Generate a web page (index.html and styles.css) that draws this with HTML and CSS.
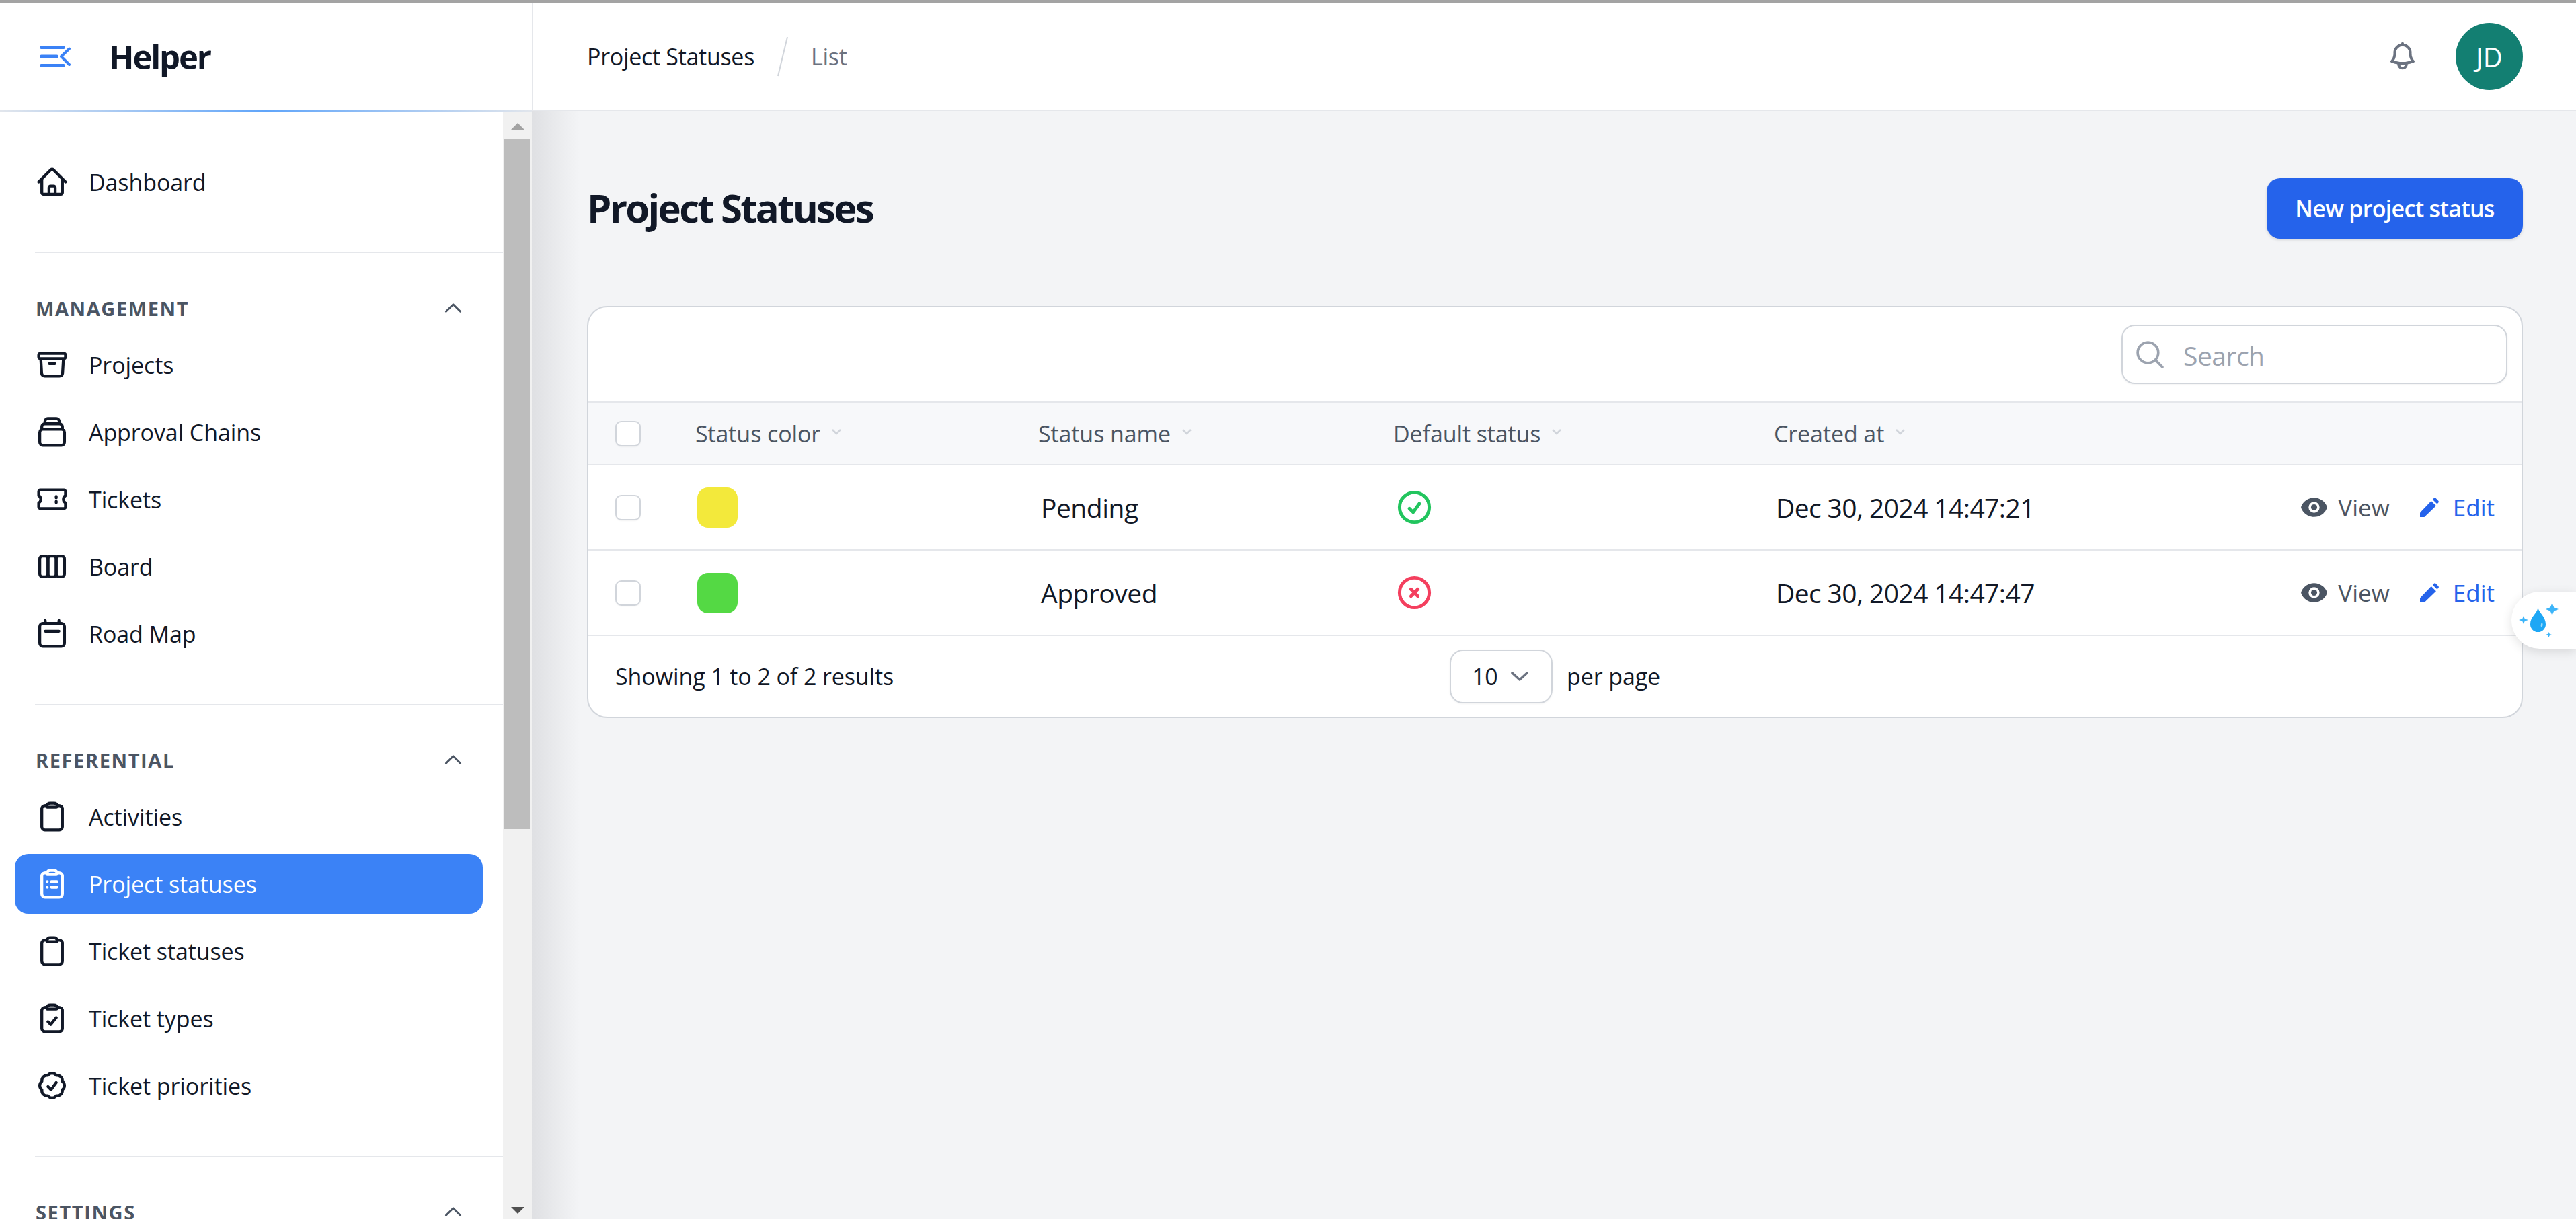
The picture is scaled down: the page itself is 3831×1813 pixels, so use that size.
FILE: index.html
```html
<!DOCTYPE html>
<html lang="en">
<head>
  <meta charset="UTF-8">
  <title>Project Statuses - Helper</title>
  <link rel="stylesheet" href="styles.css">
</head>
<body>
  <div class="app">
    <!-- Sidebar -->
    <aside class="sidebar">
      <div class="brand">
        <svg class="brand-toggle" viewBox="0 0 46 32" fill="none" stroke="#3b82f6" stroke-width="5" stroke-linecap="round" stroke-linejoin="round">
          <path d="M2.5 2.500h33M2.500 16h23M2.500 29.500h33"/>
          <path stroke-width="4" d="M44 4.500 32 16l12 12"/>
        </svg>
        <span class="brand-name">Helper</span>
      </div>
      <div class="sidebar-body">
        <nav class="nav">
          <div class="nav-group">
            <a class="nav-item">
              <svg class="nav-icon" viewBox="0 0 24 24"><path d="m2.25 12 8.954-8.955c.44-.439 1.152-.439 1.591 0L21.75 12M4.5 9.75v10.125c0 .621.504 1.125 1.125 1.125H9.75v-4.875c0-.621.504-1.125 1.125-1.125h2.25c.621 0 1.125.504 1.125 1.125V21h4.125c.621 0 1.125-.504 1.125-1.125V9.75M8.25 21h8.25"/></svg>
              Dashboard
            </a>
          </div>
          <hr class="nav-rule">
          <div class="nav-label">
            <span>Management</span>
            <svg class="nav-chevron" viewBox="0 0 24 24"><path d="m4.5 15.75 7.5-7.5 7.5 7.5"/></svg>
          </div>
          <div class="nav-group">
            <a class="nav-item">
              <svg class="nav-icon" viewBox="0 0 24 24"><path d="m20.25 7.5-.625 10.632a2.25 2.25 0 0 1-2.247 2.118H6.622a2.25 2.25 0 0 1-2.247-2.118L3.75 7.5M10 11.25h4M3.375 7.5h17.25c.621 0 1.125-.504 1.125-1.125v-1.5c0-.621-.504-1.125-1.125-1.125H3.375c-.621 0-1.125.504-1.125 1.125v1.5c0 .621.504 1.125 1.125 1.125Z"/></svg>
              Projects
            </a>
            <a class="nav-item">
              <svg class="nav-icon" viewBox="0 0 24 24"><path d="M4.5 10V8.200A2.200 2.200 0 0 1 6.700 6h10.600a2.200 2.200 0 0 1 2.200 2.200V10M6.800 6V4.200A2 2 0 0 1 8.800 2.200h6.400a2 2 0 0 1 2 2V6M5.250 10h13.500A2.250 2.250 0 0 1 21 12.250v7.200a2.250 2.250 0 0 1-2.250 2.250H5.250A2.250 2.250 0 0 1 3 19.450v-7.200A2.250 2.250 0 0 1 5.250 10Z"/></svg>
              Approval Chains
            </a>
            <a class="nav-item">
              <svg class="nav-icon" viewBox="0 0 24 24"><path d="M15 10v1m0 2.500v1M3.375 5.250c-.621 0-1.125.504-1.125 1.125v3.026a2.999 2.999 0 0 1 0 5.198v3.026c0 .621.504 1.125 1.125 1.125h17.250c.621 0 1.125-.504 1.125-1.125v-3.026a2.999 2.999 0 0 1 0-5.198V6.375c0-.621-.504-1.125-1.125-1.125H3.375Z"/></svg>
              Tickets
            </a>
            <a class="nav-item">
              <svg class="nav-icon" viewBox="0 0 24 24"><rect x="3" y="4.500" width="6" height="15" rx="2"/><rect x="9" y="4.500" width="6" height="15" rx="2"/><rect x="15" y="4.500" width="6" height="15" rx="2"/></svg>
              Board
            </a>
            <a class="nav-item">
              <svg class="nav-icon" viewBox="0 0 24 24"><path d="M7 2.400v2.100M17 2.400v2.100M7 10.200h10M5.250 4.500h13.500A2.250 2.250 0 0 1 21 6.750v12.200a2.250 2.250 0 0 1-2.250 2.250H5.250A2.250 2.250 0 0 1 3 18.950V6.750A2.250 2.250 0 0 1 5.250 4.500Z"/></svg>
              Road Map
            </a>
          </div>
          <hr class="nav-rule">
          <div class="nav-label">
            <span>Referential</span>
            <svg class="nav-chevron" viewBox="0 0 24 24"><path d="m4.5 15.75 7.5-7.5 7.5 7.5"/></svg>
          </div>
          <div class="nav-group">
            <a class="nav-item">
              <svg class="nav-icon" viewBox="0 0 24 24"><path d="M15.666 3.888A2.25 2.25 0 0 0 13.5 2.25h-3c-1.03 0-1.9.693-2.166 1.638m7.332 0c.055.194.084.4.084.612v0a.75.75 0 0 1-.75.75H9a.75.75 0 0 1-.75-.75v0c0-.212.03-.418.084-.612m7.332 0c.646.049 1.288.11 1.927.184 1.1.128 1.907 1.077 1.907 2.185V19.5a2.25 2.25 0 0 1-2.25 2.25H6.75A2.25 2.25 0 0 1 4.5 19.5V6.257c0-1.108.806-2.057 1.907-2.185a48.208 48.208 0 0 1 1.927-.184"/></svg>
              Activities
            </a>
            <a class="nav-item active">
              <svg class="nav-icon" viewBox="0 0 24 24"><path d="M11.5 10.5h4M11.5 14.5h4M8.4 10.5h.01M8.4 14.5h.01M15.666 3.888A2.25 2.25 0 0 0 13.5 2.25h-3c-1.03 0-1.9.693-2.166 1.638m7.332 0c.055.194.084.4.084.612v0a.75.75 0 0 1-.75.75H9a.75.75 0 0 1-.75-.75v0c0-.212.03-.418.084-.612m7.332 0c.646.049 1.288.11 1.927.184 1.1.128 1.907 1.077 1.907 2.185V19.5a2.25 2.25 0 0 1-2.25 2.25H6.75A2.25 2.25 0 0 1 4.5 19.5V6.257c0-1.108.806-2.057 1.907-2.185a48.208 48.208 0 0 1 1.927-.184"/></svg>
              Project statuses
            </a>
            <a class="nav-item">
              <svg class="nav-icon" viewBox="0 0 24 24"><path d="M15.666 3.888A2.25 2.25 0 0 0 13.5 2.25h-3c-1.03 0-1.9.693-2.166 1.638m7.332 0c.055.194.084.4.084.612v0a.75.75 0 0 1-.75.75H9a.75.75 0 0 1-.75-.75v0c0-.212.03-.418.084-.612m7.332 0c.646.049 1.288.11 1.927.184 1.1.128 1.907 1.077 1.907 2.185V19.5a2.25 2.25 0 0 1-2.25 2.25H6.75A2.25 2.25 0 0 1 4.5 19.5V6.257c0-1.108.806-2.057 1.907-2.185a48.208 48.208 0 0 1 1.927-.184"/></svg>
              Ticket statuses
            </a>
            <a class="nav-item">
              <svg class="nav-icon" viewBox="0 0 24 24"><path d="m9 14.5 2 2 4-5M15.666 3.888A2.25 2.25 0 0 0 13.5 2.25h-3c-1.03 0-1.9.693-2.166 1.638m7.332 0c.055.194.084.4.084.612v0a.75.75 0 0 1-.75.75H9a.75.75 0 0 1-.75-.75v0c0-.212.03-.418.084-.612m7.332 0c.646.049 1.288.11 1.927.184 1.1.128 1.907 1.077 1.907 2.185V19.5a2.25 2.25 0 0 1-2.25 2.25H6.75A2.25 2.25 0 0 1 4.5 19.5V6.257c0-1.108.806-2.057 1.907-2.185a48.208 48.208 0 0 1 1.927-.184"/></svg>
              Ticket types
            </a>
            <a class="nav-item">
              <svg class="nav-icon" viewBox="0 0 24 24"><path d="M9 12.75 11.25 15 15 9.75M21 12c0 1.268-.63 2.39-1.593 3.068a3.745 3.745 0 0 1-1.043 3.296 3.745 3.745 0 0 1-3.296 1.043A3.745 3.745 0 0 1 12 21c-1.268 0-2.39-.63-3.068-1.593a3.746 3.746 0 0 1-3.296-1.043 3.745 3.745 0 0 1-1.043-3.296A3.745 3.745 0 0 1 3 12c0-1.268.63-2.39 1.593-3.068a3.745 3.745 0 0 1 1.043-3.296 3.746 3.746 0 0 1 3.296-1.043A3.746 3.746 0 0 1 12 3c1.268 0 2.39.63 3.068 1.593a3.746 3.746 0 0 1 3.296 1.043 3.746 3.746 0 0 1 1.043 3.296A3.745 3.745 0 0 1 21 12Z"/></svg>
              Ticket priorities
            </a>
          </div>
          <hr class="nav-rule">
          <div class="nav-label">
            <span>Settings</span>
            <svg class="nav-chevron" viewBox="0 0 24 24"><path d="m4.5 15.75 7.5-7.5 7.5 7.5"/></svg>
          </div>
        </nav>
        <div class="scrollbar">
          <div class="scroll-btn"><span class="arrow-up"></span></div>
          <div class="scroll-thumb"></div>
          <div class="scroll-btn scroll-btn-end"><span class="arrow-down"></span></div>
        </div>
      </div>
    </aside>

    <!-- Main -->
    <div class="main">
      <header class="topbar">
        <div class="crumbs">
          <span class="crumb">Project Statuses</span>
          <svg class="crumb-slash" viewBox="0 0 16 60"><path d="M15 1 1 59"/></svg>
          <span class="crumb crumb-muted">List</span>
        </div>
        <div class="topbar-right">
          <svg class="bell" viewBox="0 0 24 24"><path d="M14.857 17.082a23.848 23.848 0 0 0 5.454-1.31A8.967 8.967 0 0 1 18 9.75V9A6 6 0 0 0 6 9v.75a8.967 8.967 0 0 1-2.312 6.022c1.733.64 3.56 1.085 5.455 1.31m5.714 0a24.255 24.255 0 0 1-5.714 0m5.714 0a3 3 0 1 1-5.714 0M12 3V2"/></svg>
          <div class="avatar">JD</div>
        </div>
      </header>

      <main class="content">
        <div class="page-head">
          <h1>Project Statuses</h1>
          <button class="btn-primary">New project status</button>
        </div>

        <section class="card">
          <div class="toolbar">
            <label class="search">
              <svg class="search-icon" viewBox="0 0 24 24"><path d="m21 21-5.197-5.197m0 0A7.5 7.5 0 1 0 5.196 5.196a7.5 7.5 0 0 0 10.607 10.607Z"/></svg>
              <input type="text" placeholder="Search">
            </label>
          </div>

          <table class="table">
            <thead>
              <tr>
                <th class="col-check"><span class="checkbox"></span></th>
                <th class="col-color"><span class="th-label">Status color <svg class="sort" viewBox="0 0 16 10"><path d="m2 2 6 6 6-6"/></svg></span></th>
                <th class="col-name"><span class="th-label">Status name <svg class="sort" viewBox="0 0 16 10"><path d="m2 2 6 6 6-6"/></svg></span></th>
                <th class="col-default"><span class="th-label">Default status <svg class="sort" viewBox="0 0 16 10"><path d="m2 2 6 6 6-6"/></svg></span></th>
                <th class="col-created"><span class="th-label">Created at <svg class="sort" viewBox="0 0 16 10"><path d="m2 2 6 6 6-6"/></svg></span></th>
                <th></th>
              </tr>
            </thead>
            <tbody>
              <tr>
                <td class="col-check"><span class="checkbox"></span></td>
                <td><span class="swatch swatch-yellow"></span></td>
                <td>Pending</td>
                <td>
                  <svg class="state state-yes" viewBox="0 0 24 24"><circle cx="12" cy="12" r="9"/><path d="m9 12.75 2.25 2.25L15 9.75"/></svg>
                </td>
                <td class="cell-date">Dec 30, 2024 14:47:21</td>
                <td>
                  <div class="actions">
                    <a class="action">
                      <svg class="action-eye" viewBox="0 0 20 20"><path fill-rule="evenodd" d="M.664 10.59a1.651 1.651 0 0 1 0-1.186A10.004 10.004 0 0 1 10 3c4.257 0 7.893 2.66 9.336 6.41.147.381.146.804 0 1.186A10.004 10.004 0 0 1 10 17c-4.257 0-7.893-2.66-9.336-6.41ZM14 10a4 4 0 1 1-8 0 4 4 0 0 1 8 0Z"/><circle cx="10" cy="10" r="2.2"/></svg>
                      View
                    </a>
                    <a class="action action-edit">
                      <svg class="action-pencil" viewBox="0 0 20 20"><path d="M0 20v-4.500L11.500 3.500 16.500 8.500 4.500 20Z"/><path d="m13 2 1.200-1.300c.7-.7 1.500-.7 2.100 0l2.500 2.500c.6.600.6 1.400 0 2L17.600 6.500Z"/></svg>
                      Edit
                    </a>
                  </div>
                </td>
              </tr>
              <tr>
                <td class="col-check"><span class="checkbox"></span></td>
                <td><span class="swatch swatch-green"></span></td>
                <td>Approved</td>
                <td>
                  <svg class="state state-no" viewBox="0 0 24 24"><circle cx="12" cy="12" r="9"/><path d="m9.900 9.900 4.200 4.200m0-4.200-4.200 4.200"/></svg>
                </td>
                <td class="cell-date">Dec 30, 2024 14:47:47</td>
                <td>
                  <div class="actions">
                    <a class="action">
                      <svg class="action-eye" viewBox="0 0 20 20"><path fill-rule="evenodd" d="M.664 10.59a1.651 1.651 0 0 1 0-1.186A10.004 10.004 0 0 1 10 3c4.257 0 7.893 2.66 9.336 6.41.147.381.146.804 0 1.186A10.004 10.004 0 0 1 10 17c-4.257 0-7.893-2.66-9.336-6.41ZM14 10a4 4 0 1 1-8 0 4 4 0 0 1 8 0Z"/><circle cx="10" cy="10" r="2.2"/></svg>
                      View
                    </a>
                    <a class="action action-edit">
                      <svg class="action-pencil" viewBox="0 0 20 20"><path d="M0 20v-4.500L11.500 3.500 16.500 8.500 4.500 20Z"/><path d="m13 2 1.200-1.300c.7-.7 1.500-.7 2.100 0l2.500 2.500c.6.600.6 1.400 0 2L17.600 6.500Z"/></svg>
                      Edit
                    </a>
                  </div>
                </td>
              </tr>
            </tbody>
          </table>

          <div class="card-foot">
            <span>Showing 1 to 2 of 2 results</span>
            <div class="per-page">
              <div class="select">
                <span>10</span>
                <svg class="select-chevron" viewBox="0 0 26 14"><path d="m2 2 11 10L24 2"/></svg>
              </div>
              <span>per page</span>
            </div>
          </div>
        </section>
      </main>
    </div>
  </div>

  <!-- Floating widget at the window edge -->
  <div class="float-tab">
    <svg viewBox="0 0 60 52">
      <path class="drop" d="M28.500 7c2 8 11.500 13 11.500 24.500a11.500 11.500 0 0 1-23 0C17 20 26 17 28.500 7Z"/>
      <path class="drop-shine" d="M34.500 28c1.500 3 1.500 6-1 8-1.500-2-1-5 1-8Z"/>
      <path class="spark" d="m49.500 0 2.700 6.300L59 9l-6.800 2.700L49.500 18l-2.700-6.300L40 9l6.800-2.700Z"/>
      <path class="spark" d="m7 19 1.800 4.200L14 25l-5.200 1.800L7 31l-1.800-4.200L0 25l5.200-1.800Z"/>
      <path class="spark" d="m44.500 43 1.200 2.800L49 47l-3.300 1.200L44.500 51l-1.200-2.800L40 47l3.300-1.200Z"/>
    </svg>
  </div>
</body>
</html>
```

FILE: styles.css
```css
* {
  box-sizing: border-box;
}

html, body {
  margin: 0;
  height: 100%;
  overflow: hidden;
}

body {
  border-top: 5px solid #a3a3a3;
  background-color: #f3f4f6;
  color: #111827;
  font-family: "Open Sans", "Noto Sans", sans-serif;
  font-size: 34px;
  letter-spacing: -0.1px;
}

svg {
  flex: none;
  display: block;
}

.app {
  display: flex;
  height: 100%;
}

/* Sidebar */
.sidebar {
  display: flex;
  flex-direction: column;
  flex: none;
  width: 791px;
  height: 100%;
  background-color: #fff;
}

.brand {
  display: flex;
  flex: none;
  align-items: center;
  gap: 57px;
  height: 161px;
  padding-left: 59px;
  border-bottom: 3px solid;
  border-image: linear-gradient(to right, #e2e6ec, #60a5fa 50%, #e2e6ec) 1;
}

.brand-toggle {
  width: 46px;
  height: 32px;
}

.brand-name {
  font-size: 49px;
  font-weight: 700;
  letter-spacing: -2.1px;
}

.sidebar-body {
  display: flex;
  flex: 1;
  min-height: 0;
}

.nav {
  flex: 1;
  min-width: 0;
  padding-top: 60px;
  overflow: hidden;
}

.nav-group {
  display: flex;
  flex-direction: column;
  gap: 11px;
  padding: 0 30px 0 22px;
}

.nav-item {
  display: flex;
  align-items: center;
  gap: 30px;
  height: 89px;
  padding-left: 31px;
  border-radius: 20px;
  font-weight: 500;
}

.nav-item.active {
  background-color: #3b82f6;
  color: #fff;
}

.nav-icon {
  width: 49px;
  height: 49px;
  fill: none;
  stroke: currentColor;
  stroke-width: 2.1;
  stroke-linecap: round;
  stroke-linejoin: round;
}

.nav-rule {
  height: 2px;
  margin: 60px 0 61px 52px;
  border: 0;
  background-color: #e5e7eb;
}

.nav-label {
  display: flex;
  align-items: center;
  justify-content: space-between;
  height: 40px;
  margin-bottom: 20px;
  padding: 0 57px 0 53px;
  color: #4b5563;
  font-size: 29px;
  font-weight: 700;
  letter-spacing: 1.6px;
  text-transform: uppercase;
}

.nav-chevron {
  width: 34px;
  height: 34px;
  fill: none;
  stroke: #4b5563;
  stroke-width: 2;
  stroke-linecap: round;
  stroke-linejoin: round;
}

.scrollbar {
  display: flex;
  flex: none;
  flex-direction: column;
  width: 43px;
  background-color: #f1f1f1;
}

.scroll-btn {
  display: flex;
  flex: none;
  justify-content: center;
  height: 41px;
  padding-top: 17px;
}

.scroll-btn-end {
  margin-top: auto;
  height: 40px;
  padding-top: 22px;
}

.arrow-up, .arrow-down {
  width: 0;
  height: 0;
  border-left: 10px solid transparent;
  border-right: 10px solid transparent;
}

.arrow-up {
  border-bottom: 10px solid #a3a3a3;
}

.arrow-down {
  border-top: 10px solid #505050;
}

.scroll-thumb {
  flex: none;
  width: 38px;
  height: 1026px;
  margin-left: 2px;
  background-color: #bdbdbd;
}

/* Main */
.main {
  display: flex;
  flex: 1;
  flex-direction: column;
  min-width: 0;
}

.topbar {
  display: flex;
  flex: none;
  align-items: center;
  justify-content: space-between;
  height: 160px;
  padding: 0 79px 0 80px;
  border-left: 2px solid #e5e7eb;
  border-bottom: 2px solid #e5e7eb;
  background-color: #fff;
}

.crumbs {
  display: flex;
  align-items: center;
}

.crumb {
  font-weight: 500;
  letter-spacing: -0.3px;
}

.crumb-muted {
  color: #6b7280;
}

.crumb-slash {
  width: 16px;
  height: 60px;
  margin: 0 34px;
  fill: none;
  stroke: #d1d5db;
  stroke-width: 2;
}

.topbar-right {
  display: flex;
  align-items: center;
  gap: 56px;
}

.bell {
  width: 46px;
  height: 46px;
  fill: none;
  stroke: #6b7280;
  stroke-width: 2.1;
  stroke-linecap: round;
  stroke-linejoin: round;
}

.avatar {
  display: flex;
  align-items: center;
  justify-content: center;
  width: 100px;
  height: 100px;
  border-radius: 50%;
  background-color: #137f72;
  color: #fff;
  font-size: 40px;
  letter-spacing: 0;
}

.content {
  flex: 1;
  padding: 100px 79px 0 82px;
  background: linear-gradient(to right, #dfe0e3, #f3f4f6 70px);
}

.page-head {
  display: flex;
  align-items: center;
  justify-content: space-between;
  height: 90px;
  margin-bottom: 100px;
}

h1 {
  margin: 0;
  padding-bottom: 4px;
  font-size: 58px;
  font-weight: 700;
  letter-spacing: -2.7px;
}

.btn-primary {
  width: 381px;
  height: 90px;
  padding: 0;
  border: 0;
  border-radius: 20px;
  background-color: #2563eb;
  box-shadow: 0 2px 4px rgba(0, 0, 0, 0.12);
  color: #fff;
  font: inherit;
  font-weight: 600;
  letter-spacing: -0.7px;
}

/* Table card */
.card {
  overflow: hidden;
  border: 2px solid #d1d5db;
  border-radius: 30px;
  background-color: #fff;
}

.toolbar {
  display: flex;
  align-items: center;
  justify-content: flex-end;
  height: 142px;
  padding-right: 21px;
  border-bottom: 2px solid #e5e7eb;
}

.search {
  display: flex;
  align-items: center;
  gap: 25px;
  width: 574px;
  height: 88px;
  padding-left: 16px;
  border: 2px solid #d1d5db;
  border-radius: 20px;
  box-shadow: 0 1px 3px rgba(0, 0, 0, 0.05);
}

.search-icon {
  width: 49px;
  height: 49px;
  fill: none;
  stroke: #9ca3af;
  stroke-width: 1.8;
  stroke-linecap: round;
  stroke-linejoin: round;
}

.search input {
  flex: 1;
  min-width: 0;
  padding: 2px 0 0;
  border: 0;
  outline: 0;
  background: none;
  color: #111827;
  font: inherit;
  font-size: 39px;
  letter-spacing: -0.5px;
}

.search input::placeholder {
  color: #9ca3af;
  opacity: 1;
}

.table {
  width: 100%;
  border-collapse: collapse;
  table-layout: fixed;
}

th {
  height: 92px;
  padding: 0 0 0 29px;
  border-bottom: 2px solid #e5e7eb;
  background-color: #f7f8fa;
  color: #4b5563;
  font-weight: 500;
  text-align: left;
}

td {
  height: 127px;
  padding: 0 0 0 33px;
  border-bottom: 2px solid #e5e7eb;
  font-size: 39px;
  letter-spacing: -0.5px;
}

th.col-check, td.col-check {
  padding-left: 40px;
}

td.cell-date {
  padding-left: 32px;
  letter-spacing: -0.6px;
}

.col-check {
  width: 130px;
}

.col-color {
  width: 510px;
}

.col-name {
  width: 528px;
}

.col-default {
  width: 566px;
}

.col-created {
  width: 560px;
}

.th-label {
  display: inline-flex;
  align-items: center;
  gap: 16px;
}

.sort {
  width: 16px;
  height: 10px;
  margin-top: -6px;
  fill: none;
  stroke: #d1d5db;
  stroke-width: 2.5;
}

.checkbox {
  display: block;
  width: 38px;
  height: 38px;
  border: 2px solid #d1d5db;
  border-radius: 9px;
  background-color: #fff;
  box-shadow: 0 1px 2px rgba(0, 0, 0, 0.05);
}

.swatch {
  display: block;
  width: 60px;
  height: 60px;
  margin-left: -1px;
  border-radius: 16px;
}

.swatch-yellow {
  background-color: #f3e93b;
}

.swatch-green {
  background-color: #54d944;
}

.state {
  width: 59px;
  height: 59px;
  margin-left: -2px;
  fill: none;
  stroke-width: 2;
  stroke-linecap: round;
  stroke-linejoin: round;
}

.state-yes {
  stroke: #22c55e;
}

.state-no {
  stroke: #f43f5e;
}

.actions {
  display: flex;
  justify-content: flex-end;
  gap: 45px;
  padding-right: 40px;
}

.action {
  display: flex;
  align-items: center;
  gap: 15px;
  color: #4b5563;
  font-size: 35px;
  font-weight: 500;
  letter-spacing: 0;
}

.action-edit {
  gap: 20px;
  color: #2563eb;
}

.action-eye {
  width: 41px;
  height: 41px;
  fill: #4b5563;
}

.action-pencil {
  width: 29px;
  height: 29px;
  fill: #2563eb;
}

.card-foot {
  display: grid;
  grid-template-columns: 1fr auto 1fr;
  align-items: center;
  height: 120px;
  padding: 0 40px;
  font-weight: 500;
}

.per-page {
  display: flex;
  align-items: center;
  gap: 21px;
}

.select {
  display: flex;
  align-items: center;
  justify-content: space-between;
  width: 153px;
  height: 80px;
  padding: 0 34px 0 31px;
  border: 2px solid #d1d5db;
  border-radius: 20px;
  box-shadow: 0 1px 3px rgba(0, 0, 0, 0.05);
  font-weight: 400;
}

.select-chevron {
  width: 26px;
  height: 14px;
  fill: none;
  stroke: #6b7280;
  stroke-width: 3.5;
  stroke-linecap: round;
  stroke-linejoin: round;
}

/* Floating widget */
.float-tab {
  position: absolute;
  top: 880px;
  right: 0;
  display: flex;
  align-items: center;
  width: 96px;
  height: 85px;
  padding-left: 11px;
  border-radius: 42px 0 0 42px;
  background-color: #fff;
  box-shadow: 0 4px 16px rgba(0, 0, 0, 0.12);
}

.float-tab svg {
  width: 60px;
  height: 52px;
}

.drop {
  fill: #1ea7f5;
}

.drop-shine {
  fill: #9bdcfb;
}

.spark {
  fill: #3db5f9;
}
```
